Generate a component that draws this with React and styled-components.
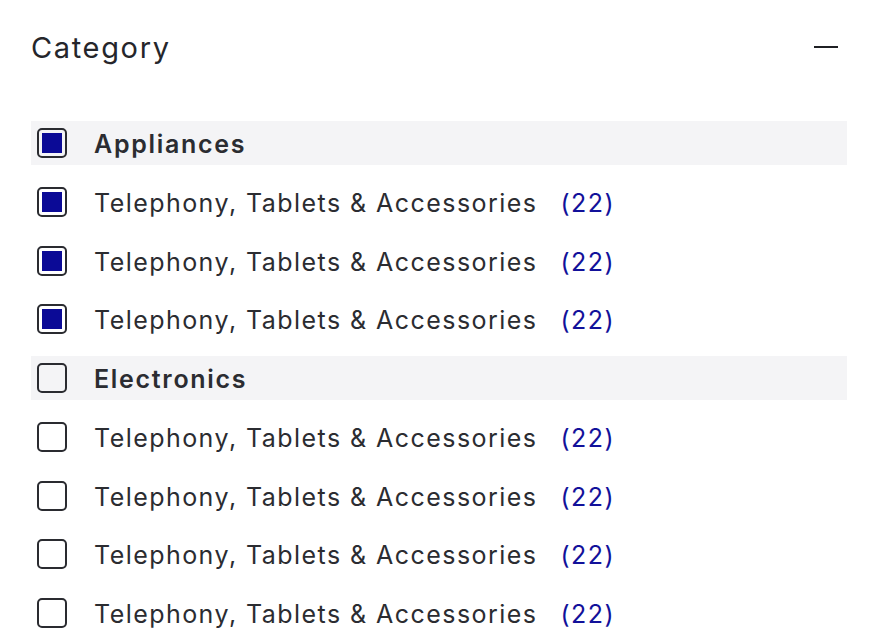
import styled, {createGlobalStyle} from "styled-components";

const GlobalStyle = createGlobalStyle`
  body {
    margin: 0;
    background: #ffffff;
    font-family: "Inter", "Noto Sans", sans-serif;
  }
`;

const Panel = styled.section`
  padding: 21px 35px 0 31px;
  width: 882px;
  box-sizing: border-box;
`;

const Header = styled.div`
  display: flex;
  align-items: center;
  justify-content: space-between;
  height: 52px;
  margin-bottom: 48px;
`;

const Title = styled.h2`
  margin: 0;
  font-size: 29px;
  font-weight: 400;
  color: #25262b;
  letter-spacing: 1.65px;
`;

const Collapse = styled.button`
  width: 24px;
  height: 24px;
  margin-right: 9px;
  padding: 0;
  border: 0;
  background: none;
  display: flex;
  align-items: center;

  &::before {
    content: "";
    display: block;
    width: 24px;
    height: 2px;
    background: #1f2024;
  }
`;

const List = styled.ul`
  list-style: none;
  margin: 0;
  padding: 0;
  display: flex;
  flex-direction: column;
  gap: 14.75px;
`;

const Row = styled.li`
  display: flex;
  align-items: center;
  height: 44px;
  padding-left: 6px;
  background: ${p => (p.$group ? "#f4f4f6" : "transparent")};
`;

const Box = styled.span`
  flex: none;
  width: 30px;
  height: 30px;
  box-sizing: border-box;
  border: 2px solid #2a2b30;
  border-radius: 5px;
  padding: 3px;
  margin-right: 27px;

  &::after {
    content: "";
    display: ${p => (p.$checked ? "block" : "none")};
    width: 100%;
    height: 100%;
    background: #0b0a96;
  }
`;

const Label = styled.span`
  padding-top: 2px;
  font-size: 25px;
  font-weight: ${p => (p.$group ? 600 : 400)};
  color: #2b2c31;
  letter-spacing: ${p => (p.$group ? "1.7px" : "1.45px")};
`;

const Count = styled.span`
  padding-top: 2px;
  margin-left: 23px;
  font-size: 25px;
  color: #12119a;
  letter-spacing: 1.5px;
`;

const groups = [
  {name: "Appliances", checked: true},
  {name: "Electronics", checked: false},
];

const items = [1, 2, 3, 4];

export default function App() {
  return (
    <>
      <GlobalStyle/>
      <Panel>
        <Header>
          <Title>Category</Title>
          <Collapse aria-label="Collapse"/>
        </Header>
        <List>
          {groups.map(g => (
            <>
              <Row $group key={g.name}>
                <Box $checked={g.checked}/>
                <Label $group>{g.name}</Label>
              </Row>
              {items.slice(0, g.checked ? 3 : 4).map(i => (
                <Row key={g.name + i}>
                  <Box $checked={g.checked}/>
                  <Label>Telephony, Tablets &amp; Accessories</Label>
                  <Count>(22)</Count>
                </Row>
              ))}
            </>
          ))}
        </List>
      </Panel>
    </>
  );
}
